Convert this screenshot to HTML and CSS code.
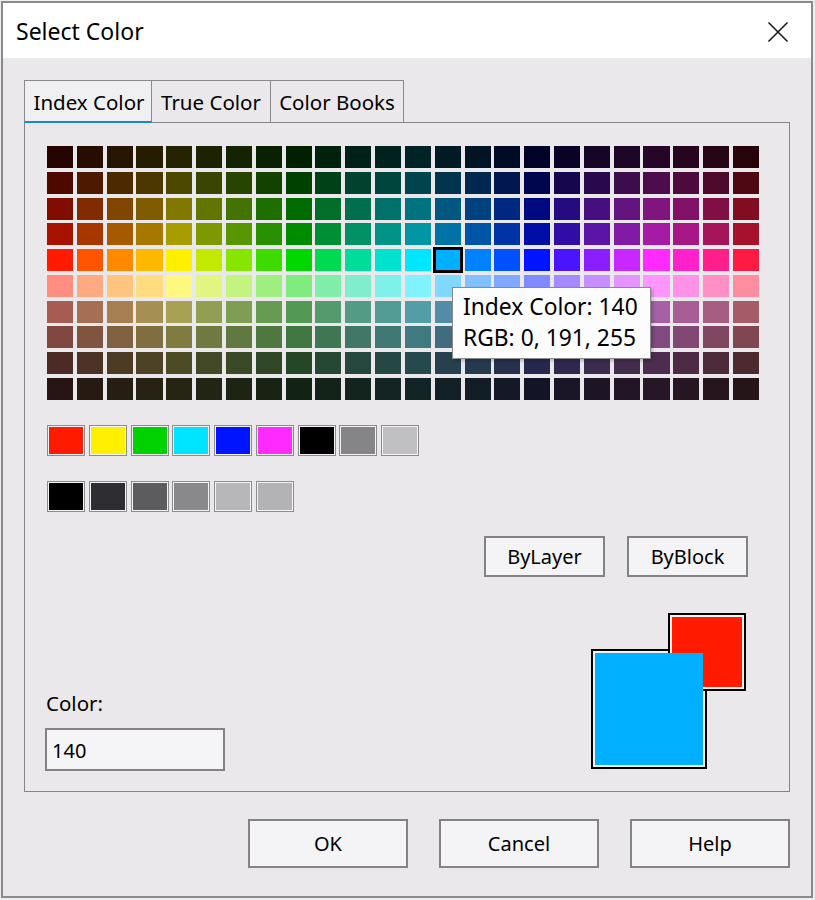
FILE: index.html
```html
<!DOCTYPE html>
<html>
<head>
<meta charset="utf-8">
<title>Select Color</title>
<link rel="stylesheet" href="styles.css">
</head>
<body>
<div class="window">
  <div class="titlebar">
    <span class="title">Select Color</span>
    <svg class="close" width="22" height="22" viewBox="0 0 22 22"><path d="M1.5 1.5 L20.5 20.5 M20.5 1.5 L1.5 20.5" stroke="#1a1a1a" stroke-width="1.6" fill="none"/></svg>
  </div>
  <div class="content">
    <div class="tabs">
      <div class="tab tab-index active">Index Color</div>
      <div class="tab tab-true">True Color</div>
      <div class="tab tab-books">Color Books</div>
    </div>
    <div class="panel">
      <div class="palette" id="palette"></div>
      <div class="swatches">
        <div class="sw" style="background:#ff1a00"></div>
        <div class="sw" style="background:#fff000"></div>
        <div class="sw" style="background:#00d200"></div>
        <div class="sw" style="background:#00e5ff"></div>
        <div class="sw" style="background:#0014ff"></div>
        <div class="sw" style="background:#ff2aff"></div>
        <div class="sw" style="background:#000000"></div>
        <div class="sw" style="background:#858487"></div>
        <div class="sw" style="background:#c0bfc2"></div>
      </div>
      <div class="swatches grays">
        <div class="sw" style="background:#000000"></div>
        <div class="sw" style="background:#2e2d31"></div>
        <div class="sw" style="background:#5c5b5e"></div>
        <div class="sw" style="background:#89888b"></div>
        <div class="sw" style="background:#b7b6b9"></div>
        <div class="sw" style="background:#b3b2b5"></div>
      </div>
      <div class="mid-buttons">
        <button class="btn small">ByLayer</button>
        <button class="btn small">ByBlock</button>
      </div>
      <div class="bottom">
        <div class="color-field">
          <div class="label">Color:</div>
          <div class="input">140</div>
        </div>
        <div class="preview">
          <div class="blue-frame"></div>
          <div class="red-box"><div class="red-fill"></div></div>
          <div class="blue-fill"></div>
        </div>
      </div>
      <div class="tooltip">
        <div>Index Color: 140</div>
        <div>RGB: 0, 191, 255</div>
      </div>
    </div>
    <div class="footer">
      <button class="btn big">OK</button>
      <button class="btn big">Cancel</button>
      <button class="btn big">Help</button>
    </div>
  </div>
</div>
<script src="app.js"></script>
</body>
</html>
```
FILE: styles.css
```css
html, body {
  margin: 0;
  padding: 0;
  background: #eeedf0;
}
body {
  font-family: "Noto Sans", "Open Sans", sans-serif;
  color: #000;
}
.window {
  box-sizing: border-box;
  margin: 1px 0 0 1px;
  width: 812px;
  height: 897px;
  border: 2px solid #8a8a8c;
  background: #eae8eb;
  display: flex;
  flex-direction: column;
}
.titlebar {
  height: 55px;
  flex: none;
  background: #ffffff;
  display: flex;
  align-items: center;
  justify-content: space-between;
  padding: 0 22px 0 13px;
}
.title {
  font-size: 23px;
  margin-top: 1px;
}
.close {
  display: block;
  margin-top: 3px;
}
.content {
  padding: 22px 21px 0 21px;
  display: flex;
  flex-direction: column;
}
.tabs {
  display: flex;
  height: 42px;
  position: relative;
  z-index: 1;
}
.tab {
  box-sizing: border-box;
  height: 42px;
  border: 1px solid #8a898c;
  border-bottom: none;
  display: flex;
  align-items: center;
  justify-content: center;
  font-size: 20.5px;
  padding-top: 1px;
  background: #eae8eb;
  white-space: nowrap;
}
.tab + .tab {
  border-left: none;
}
.tab-index { width: 128px; }
.tab-true { width: 119px; }
.tab-books { width: 133px; }
.tab.active {
  background: #f0eff2;
  border-bottom: 2px solid #1b86d6;
  height: 43px;
  padding-left: 2px;
}
.panel {
  position: relative;
  box-sizing: border-box;
  height: 670px;
  border: 1px solid #858487;
  background: #eae8eb;
  padding: 23px 0 0 22px;
}
.palette {
  width: 712px;
  height: 254px;
  display: grid;
  grid-template-columns: repeat(24, 1fr);
  grid-template-rows: repeat(10, 1fr);
  column-gap: 3.8px;
  row-gap: 3.8px;
}
.cell {
  width: 100%;
  height: 100%;
}
.cell.sel {
  outline: 3px solid #000;
  outline-offset: -1px;
  position: relative;
}
.swatches {
  display: flex;
  gap: 3.75px;
  margin-top: 25px;
}
.swatches.grays {
  margin-top: 25px;
}
.sw {
  box-sizing: border-box;
  width: 38px;
  height: 31px;
  border: 1px solid #8c8b8e;
  box-shadow: inset 0 0 0 1px #f4f3f6;
}
.btn {
  box-sizing: border-box;
  font-family: "Noto Sans", "Open Sans", sans-serif;
  color: #000;
  background: #f4f3f6;
  border: 2px solid #838285;
  padding: 0;
  margin: 0;
  display: flex;
  align-items: center;
  justify-content: center;
}
.mid-buttons {
  display: flex;
  justify-content: flex-end;
  gap: 22px;
  margin-top: 24px;
  margin-right: 41px;
}
.btn.small {
  width: 121px;
  height: 41px;
  font-size: 20px;
}
.bottom {
  display: flex;
  justify-content: space-between;
  align-items: flex-end;
  margin-top: 36px;
  margin-right: 43px;
  margin-left: -2px;
}
.color-field {
  display: flex;
  flex-direction: column;
}
.label {
  font-size: 20.5px;
  line-height: 26px;
  margin-bottom: 12px;
  margin-left: 1px;
}
.input {
  box-sizing: border-box;
  width: 180px;
  height: 43px;
  border: 2px solid #838285;
  background: #f5f4f7;
  font-size: 20px;
  padding: 8px 0 0 5px;
  line-height: 26px;
}
.preview {
  position: relative;
  width: 155px;
  height: 156px;
  margin-bottom: 2px;
}
.blue-frame {
  position: absolute;
  left: 0;
  top: 36px;
  width: 116px;
  height: 120px;
  box-sizing: border-box;
  border: 2px solid #000;
  background: #f2f1f4;
}
.red-box {
  position: absolute;
  left: 77px;
  top: 0;
  width: 78px;
  height: 78px;
  box-sizing: border-box;
  border: 2px solid #000;
  background: #f2f1f4;
  padding: 2px;
}
.red-fill {
  width: 100%;
  height: 100%;
  background: #ff1a00;
}
.blue-fill {
  position: absolute;
  left: 4px;
  top: 40px;
  width: 108px;
  height: 112px;
  background: #00b0ff;
}
.tooltip {
  position: absolute;
  left: 427px;
  top: 164px;
  width: 199px;
  height: 72px;
  box-sizing: border-box;
  border: 1px solid #8a898c;
  background: #fcfcfd;
  box-shadow: 2px 2px 3px rgba(0, 0, 0, 0.22);
  padding: 3px 0 0 10px;
  font-size: 22.8px;
  line-height: 31px;
  white-space: nowrap;
}
.footer {
  display: flex;
  justify-content: flex-end;
  gap: 31px;
  margin-top: 27px;
}
.btn.big {
  width: 160px;
  height: 49px;
  font-size: 20px;
}
```
FILE: app.js
```js
(function () {
  var bright = ['#ff1a00','#ff5500','#ff8a00','#ffb800','#fff000','#c2ea00','#86e600','#3ddc00',
    '#00d800','#00da50','#00dd9a','#00e2d0','#00e6ff','#00b0ff','#0082ff','#0050ff',
    '#0014ff','#4a14ff','#8a1eff','#c828ff','#ff2aff','#ff22cc','#ff1e8a','#ff1a44'];
  var rows = [['d',0.15],['d',0.3],['d',0.5],['d',0.65],['d',1],['p',1],['p',0.65],['p',0.5],['p',0.3],['p',0.15]];
  function rgb(h) {
    return [parseInt(h.substr(1,2),16), parseInt(h.substr(3,2),16), parseInt(h.substr(5,2),16)];
  }
  var pal = document.getElementById('palette');
  for (var r = 0; r < rows.length; r++) {
    for (var c = 0; c < 24; c++) {
      var v = rgb(bright[c]);
      if (rows[r][0] === 'p') {
        v = v.map(function (x) { return x + (255 - x) * 0.5; });
      }
      var k = rows[r][1];
      v = v.map(function (x) { return Math.round(x * k); });
      var d = document.createElement('div');
      d.className = 'cell' + (r === 4 && c === 13 ? ' sel' : '');
      d.style.background = 'rgb(' + v.join(',') + ')';
      pal.appendChild(d);
    }
  }
})();
```
